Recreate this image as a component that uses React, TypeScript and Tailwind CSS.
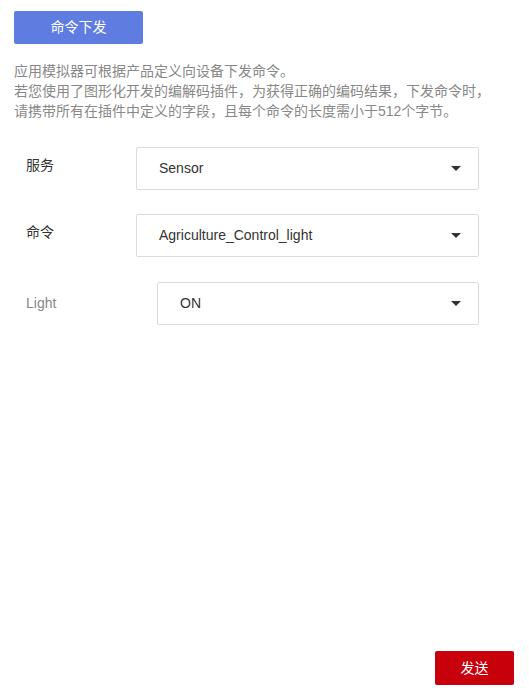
const FONT = { fontFamily: '"Liberation Sans", "Noto Sans CJK SC", sans-serif' };

function Caret() {
  return (
    <svg width="10" height="5" viewBox="0 0 10 5" className="shrink-0">
      <path d="M0 0 L10 0 L5 5 Z" fill="#333" />
    </svg>
  );
}

function SelectBox({ value, className }: { value: string; className: string }) {
  return (
    <div
      className={`flex h-[43px] items-center justify-between rounded-[2px] border border-[#dcdcdc] bg-white pl-[22px] pr-[17px] text-[14px] text-[#333] ${className}`}
    >
      <span>{value}</span>
      <Caret />
    </div>
  );
}

export default function App() {
  return (
    <div className="flex h-[688px] w-[529px] flex-col bg-white" style={FONT}>
      <div className="px-[14px] pt-[11px]">
        <button className="h-[33px] w-[129px] rounded-[2px] bg-[#5f7de0] text-[14px] text-white">
          命令下发
        </button>
        <p className="mt-[17px] text-[14px] leading-[20px] text-[#888]">
          应用模拟器可根据产品定义向设备下发命令。
          <br />
          若您使用了图形化开发的编解码插件，为获得正确的编码结果，下发命令时，
          <br />
          请携带所有在插件中定义的字段，且每个命令的长度需小于512个字节。
        </p>
      </div>

      <div className="mt-[26px] flex flex-col gap-[24px] pl-[26px] pr-[50px]">
        <div className="flex items-start">
          <span className="w-[110px] pt-[8px] text-[14px] text-[#333]">服务</span>
          <SelectBox value="Sensor" className="flex-1" />
        </div>
        <div className="flex items-start">
          <span className="w-[110px] pt-[8px] text-[14px] text-[#333]">命令</span>
          <SelectBox value="Agriculture_Control_light" className="flex-1" />
        </div>
        <div className="mt-[1px] flex items-center">
          <span className="w-[131px] text-[14px] text-[#888]">Light</span>
          <SelectBox value="ON" className="flex-1" />
        </div>
      </div>

      <div className="mt-auto flex justify-end pb-[3px] pr-[15px]">
        <button className="h-[34px] w-[79px] rounded-[2px] bg-[#c7000b] text-[14px] text-white">
          发送
        </button>
      </div>
    </div>
  );
}
